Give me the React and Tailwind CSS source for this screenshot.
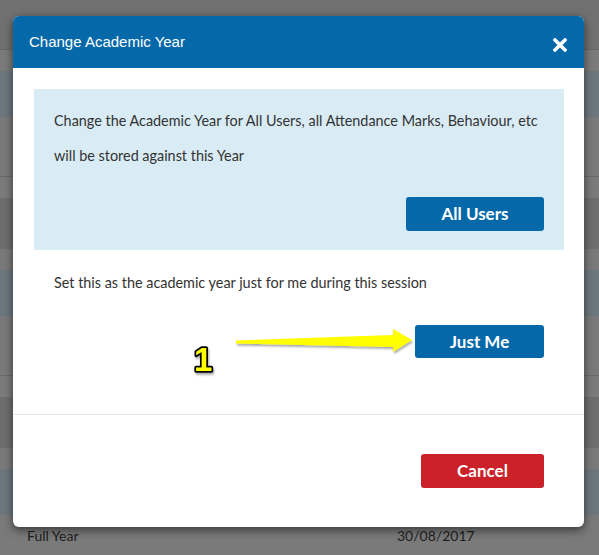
export default function App() {
  const rows = [
    { h: "h-[50px]", c: "bg-[#717171] border-b border-[#686868]" },
    { h: "h-[21px]", c: "bg-[#7b7b7b]" },
    { h: "h-[46px]", c: "bg-[#6c777e]" },
    { h: "h-[60px]", c: "bg-[#7a7a7a] border-b border-[#6a6a6a]" },
    { h: "h-[21px]", c: "bg-[#7b7b7b]" },
    { h: "h-[51px]", c: "bg-[#6e6e6e]" },
    { h: "h-[21px]", c: "bg-[#7a7a7a]" },
    { h: "h-[46px]", c: "bg-[#6c777e]" },
    { h: "h-[60px]", c: "bg-[#7a7a7a] border-b border-[#6a6a6a]" },
    { h: "h-[21px]", c: "bg-[#7b7b7b]" },
    { h: "h-[51px]", c: "bg-[#6e6e6e]" },
    { h: "h-[21px]", c: "bg-[#7a7a7a]" },
    { h: "h-[46px]", c: "bg-[#6c777e]" },
  ];
  return (
    <div className="relative w-[599px] h-[555px] overflow-hidden bg-[#7a7a7a] font-['Lato',sans-serif]">
      <div className="flex flex-col">
        {rows.map((r, i) => (
          <div key={i} className={`${r.h} ${r.c}`} />
        ))}
        <div className="flex items-center h-[40px] text-[14px] text-[#1e1e1e]">
          <span className="ml-[27px] w-[370px]">Full Year</span>
          <span>30/08/2017</span>
        </div>
      </div>

      <div className="absolute left-[13px] top-[16px] w-[571px] h-[511px] rounded-[6px] bg-white overflow-hidden shadow-[0_3px_10px_rgba(0,0,0,0.55)] flex flex-col">
        <div className="h-[52px] bg-[#0569a9] flex items-center justify-between pl-[16px] pr-[17px]">
          <span className="text-white text-[15px] font-['Liberation_Sans',Arial,sans-serif]">
            Change Academic Year
          </span>
          <svg width="14" height="14" viewBox="0 0 14 14" className="mt-[6px]">
            <path d="M2 2 L12 12 M12 2 L2 12" stroke="#fff" strokeWidth="3.4" strokeLinecap="square" />
          </svg>
        </div>

        <div className="flex flex-col pt-[21px] pb-[56px]">
          <div className="ml-[21px] mr-[20px] h-[161px] bg-[#d9ecf5] pt-[14px] px-[20px] pb-[19px] flex flex-col">
            <p className="text-[14.4px] leading-[35px] text-[#333]">
              Change the Academic Year for All Users, all Attendance Marks, Behaviour, etc will be stored against this Year
            </p>
            <div className="flex justify-end mt-[24px]">
              <button className="w-[138px] h-[34px] rounded-[3px] bg-[#0569a9] text-white text-[17px] font-bold">
                All Users
              </button>
            </div>
          </div>
          <p className="mt-[23px] pl-[41px] text-[14.4px] leading-[20px] text-[#333]">
            Set this as the academic year just for me during this session
          </p>
          <div className="flex justify-end mt-[32px] pr-[40px]">
            <button className="w-[129px] h-[33px] rounded-[3px] bg-[#0569a9] text-white text-[17px] font-bold">
              Just Me
            </button>
          </div>
        </div>

        <div className="border-t border-[#e5e5e5] flex justify-end pt-[39px] pr-[40px]">
          <button className="w-[123px] h-[34px] rounded-[3px] bg-[#cb2128] text-white text-[17px] font-bold">
            Cancel
          </button>
        </div>
      </div>

      <svg className="absolute left-[185px] top-[320px]" width="235" height="60" viewBox="185 320 235 60">
        <defs>
          <filter id="ds" x="-10%" y="-50%" width="120%" height="200%">
            <feDropShadow dx="1" dy="2" stdDeviation="1.2" floodColor="#000" floodOpacity="0.35" />
          </filter>
        </defs>
        <path
          d="M236 340.5 L393 335 L393 329 L412 340 L393 352 L393 347 L236 343.5 Z"
          fill="#ffff00"
          filter="url(#ds)"
        />
        <text
          x="194"
          y="371"
          fontFamily="Liberation Sans, Arial, sans-serif"
          fontWeight="900"
          fontSize="33"
          fill="#ffff00"
          stroke="#000"
          strokeWidth="3.5"
          paintOrder="stroke"
          strokeLinejoin="round"
          filter="url(#ds)"
        >
          1
        </text>
      </svg>
    </div>
  );
}
